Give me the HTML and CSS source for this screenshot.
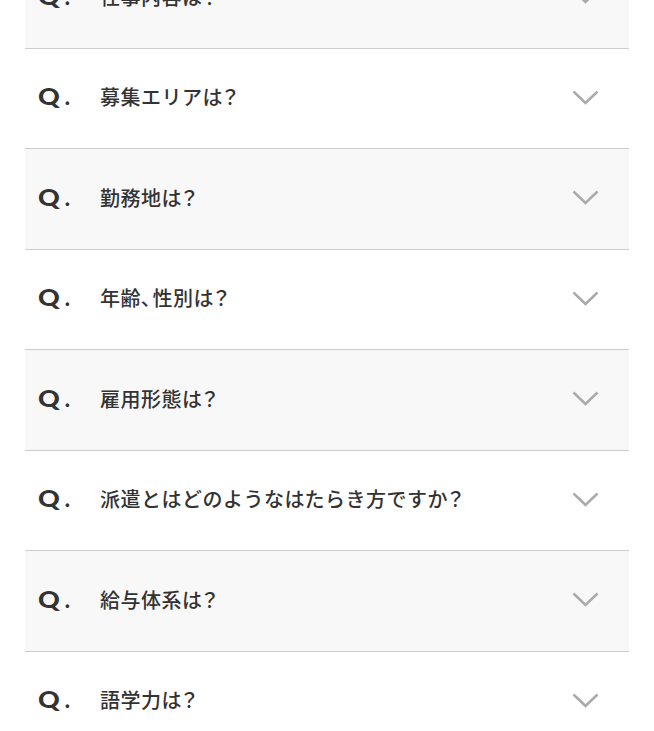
FILE: index.html
```html
<!DOCTYPE html>
<html lang="ja">
<head>
<meta charset="utf-8">
<link rel="stylesheet" href="styles.css">
</head>
<body>
<ul class="faq">
  <li class="item shade"><span class="q"><span class="qq">Q</span>.</span><span class="text">仕事内容は<span class="p">？</span></span><svg class="chev" viewBox="0 0 27 15"><polyline points="1.5,1.5 13.5,13 25.5,1.5"/></svg></li>
  <li class="item"><span class="q"><span class="qq">Q</span>.</span><span class="text">募集エリアは<span class="p">？</span></span><svg class="chev" viewBox="0 0 27 15"><polyline points="1.5,1.5 13.5,13 25.5,1.5"/></svg></li>
  <li class="item shade"><span class="q"><span class="qq">Q</span>.</span><span class="text">勤務地は<span class="p">？</span></span><svg class="chev" viewBox="0 0 27 15"><polyline points="1.5,1.5 13.5,13 25.5,1.5"/></svg></li>
  <li class="item"><span class="q"><span class="qq">Q</span>.</span><span class="text">年齢<span class="p">、</span>性別は<span class="p">？</span></span><svg class="chev" viewBox="0 0 27 15"><polyline points="1.5,1.5 13.5,13 25.5,1.5"/></svg></li>
  <li class="item shade"><span class="q"><span class="qq">Q</span>.</span><span class="text">雇用形態は<span class="p">？</span></span><svg class="chev" viewBox="0 0 27 15"><polyline points="1.5,1.5 13.5,13 25.5,1.5"/></svg></li>
  <li class="item"><span class="q"><span class="qq">Q</span>.</span><span class="text">派遣とはどのようなはたらき方ですか<span class="p">？</span></span><svg class="chev" viewBox="0 0 27 15"><polyline points="1.5,1.5 13.5,13 25.5,1.5"/></svg></li>
  <li class="item shade"><span class="q"><span class="qq">Q</span>.</span><span class="text">給与体系は<span class="p">？</span></span><svg class="chev" viewBox="0 0 27 15"><polyline points="1.5,1.5 13.5,13 25.5,1.5"/></svg></li>
  <li class="item"><span class="q"><span class="qq">Q</span>.</span><span class="text">語学力は<span class="p">？</span></span><svg class="chev" viewBox="0 0 27 15"><polyline points="1.5,1.5 13.5,13 25.5,1.5"/></svg></li>
</ul>
</body>
</html>
```
FILE: styles.css
```css
html, body {
  margin: 0;
  padding: 0;
  background: #fff;
  overflow: hidden;
}
.faq {
  list-style: none;
  margin: -52px 25px 0 25px;
  padding: 0;
}
.item {
  display: flex;
  align-items: center;
  height: 99.5px;
  border-bottom: 1px solid #cccccc;
  background: #fff;
  padding: 0 30px 0 13px;
  color: #333;
}
.item.shade {
  background: #f8f8f8;
}
.q {
  font-family: "Lato", "Liberation Sans", sans-serif;
  font-weight: 900;
  font-size: 22px;
  width: 62px;
  flex: none;
  margin-top: -3px;
}
.qq {
  display: inline-block;
  transform: scaleX(1.22);
  transform-origin: left center;
  margin-right: 9px;
}
.text {
  flex: 1;
  font-family: "Noto Sans CJK JP", "Noto Sans", sans-serif;
  font-weight: 500;
  font-size: 20px;
  letter-spacing: 0.5px;
  margin-top: -3px;
}
.p {
  font-feature-settings: "palt";
  letter-spacing: 1.5px;
}
.chev {
  width: 27px;
  height: 15px;
  flex: none;
  margin-top: -2px;
}
.chev polyline {
  fill: none;
  stroke: #aaaaaa;
  stroke-width: 2.5;
}
```
